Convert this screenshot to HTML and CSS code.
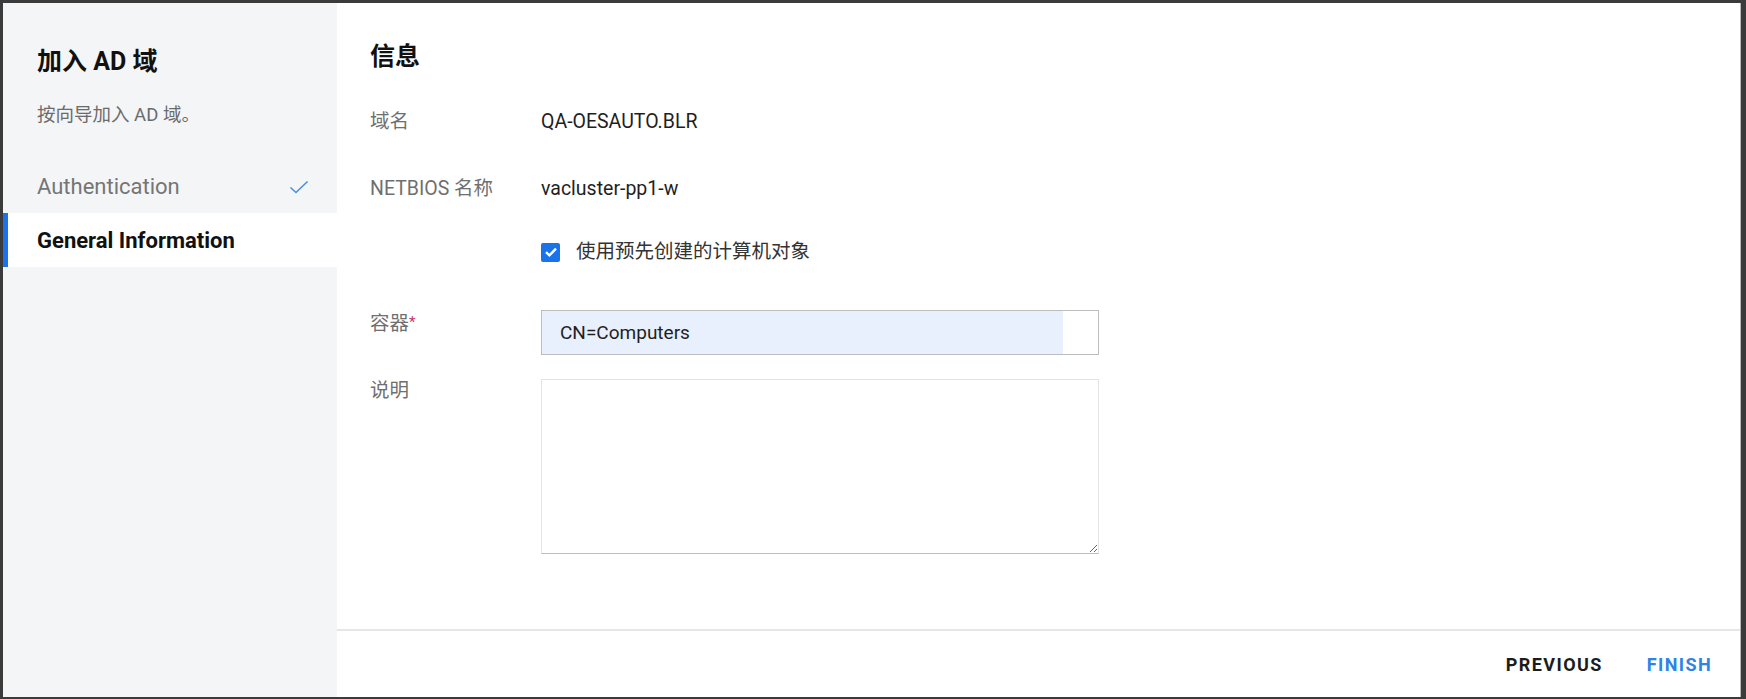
FILE: index.html
```html
<!DOCTYPE html>
<html lang="zh">
<head>
<meta charset="utf-8">
<title>加入 AD 域</title>
<link rel="stylesheet" href="styles.css">
</head>
<body>
<div class="dialog">
  <aside class="sidebar">
    <h1 class="side-title">加入 AD 域</h1>
    <p class="side-sub">按向导加入 AD 域。</p>
    <nav class="steps">
      <div class="step done">
        <span>Authentication</span>
        <svg class="tick" width="20" height="14" viewBox="0 0 20 14"><path d="M1.5 7.5 L7 12.5 L18.5 1.5" fill="none" stroke="#4a8fe0" stroke-width="1.6"/></svg>
      </div>
      <div class="step active"><span>General Information</span></div>
    </nav>
  </aside>
  <main class="main">
    <section class="content">
      <h2 class="heading">信息</h2>
      <div class="row r1"><div class="label">域名</div><div class="value">QA-OESAUTO.BLR</div></div>
      <div class="row r2"><div class="label">NETBIOS 名称</div><div class="value">vacluster-pp1-w</div></div>
      <div class="row r3"><div class="label"></div>
        <label class="check"><span class="box"><svg width="14" height="12" viewBox="0 0 14 12"><path d="M2 6.2 L5.4 9.4 L12 2.6" fill="none" stroke="#fff" stroke-width="2.4"/></svg></span><span>使用预先创建的计算机对象</span></label>
      </div>
      <div class="row r4"><div class="label lt">容器<span class="req">*</span></div><input class="field" type="text" value="CN=Computers"></div>
      <div class="row r5"><div class="label lt">说明</div><textarea class="area"></textarea></div>
    </section>
    <footer class="footer">
      <button class="btn prev">PREVIOUS</button>
      <button class="btn finish">FINISH</button>
    </footer>
  </main>
</div>
</body>
</html>
```

FILE: styles.css
```css
html, body {
  margin: 0;
  padding: 0;
}
body {
  background: #3b3b3b;
  height: 699px;
  overflow: hidden;
  font-family: Roboto, "Noto Sans CJK SC", sans-serif;
  color: #1f1f1f;
}
.dialog {
  box-sizing: border-box;
  margin: 3px 0 0 3px;
  width: 1738px;
  height: 694px;
  display: flex;
  background: #fff;
  border-right: 1px solid #b9b9b9;
}
.sidebar {
  width: 334px;
  flex: none;
  background: #f4f5f7;
  padding-top: 43px;
}
.side-title {
  margin: 0;
  padding-left: 34px;
  font-size: 25px;
  line-height: 32px;
  font-weight: 700;
  color: #111;
}
.side-sub {
  margin: 25px 0 0;
  padding-left: 34px;
  font-size: 18.5px;
  line-height: 24px;
  color: #6b6b6b;
}
.steps {
  margin-top: 32px;
}
.step {
  height: 54px;
  display: flex;
  align-items: center;
  justify-content: space-between;
  padding: 0 28px 0 34px;
  font-size: 22px;
  color: #757575;
}
.step .tick {
  margin-top: 2px;
}
.step.active {
  background: #fff;
  color: #111;
  font-weight: 700;
  box-shadow: inset 5px 0 0 #1a73e8;
}
.main {
  flex: 1;
  display: flex;
  flex-direction: column;
}
.content {
  flex: 1;
  padding: 39px 0 0 33px;
}
.heading {
  margin: 0;
  font-size: 25px;
  line-height: 30px;
  font-weight: 700;
  color: #111;
}
.row {
  display: flex;
  align-items: center;
  font-size: 19.5px;
  line-height: 30px;
}
.r1 { margin-top: 35px; }
.r2 { margin-top: 37px; }
.r3 { margin-top: 33px; }
.r4 { margin-top: 43px; align-items: flex-start; }
.r5 { margin-top: 24px; align-items: flex-start; }
.label {
  width: 171px;
  flex: none;
  color: #6f6f6f;
}
.label.lt {
  line-height: 24px;
}
.req {
  color: #d0335a;
  font-size: 15px;
  vertical-align: 3px;
}
.value {
  color: #1f1f1f;
}
.check {
  display: flex;
  align-items: center;
  gap: 16px;
  color: #333;
}
.box {
  width: 19px;
  height: 19px;
  border-radius: 2px;
  background: #1a73e8;
  display: flex;
  align-items: center;
  justify-content: center;
}
.field {
  box-sizing: border-box;
  width: 558px;
  height: 45px;
  margin: 0;
  border: 1px solid #bdbdbd;
  padding: 0 0 0 18px;
  font-family: Roboto, "Noto Sans CJK SC", sans-serif;
  font-size: 19px;
  color: #1f1f1f;
  background: linear-gradient(to right, #e8f0fe calc(100% - 35px), #fff 0);
  outline: none;
}
.area {
  box-sizing: border-box;
  width: 558px;
  height: 175px;
  margin: 0;
  border: 1px solid #e3e3e3;
  border-bottom-color: #bdbdbd;
  resize: both;
  background: #fff;
  font-family: Roboto, sans-serif;
}
.footer {
  height: 66px;
  border-top: 2px solid #e6e6e6;
  display: flex;
  align-items: center;
  justify-content: flex-end;
  gap: 44px;
  padding-right: 28px;
}
.btn {
  border: 0;
  background: none;
  padding: 0;
  font-family: Roboto, sans-serif;
  font-size: 18px;
  font-weight: 700;
  letter-spacing: 1.4px;
  cursor: pointer;
}
.prev { color: #1c1c1c; }
.finish { color: #2d83e6; }
```
